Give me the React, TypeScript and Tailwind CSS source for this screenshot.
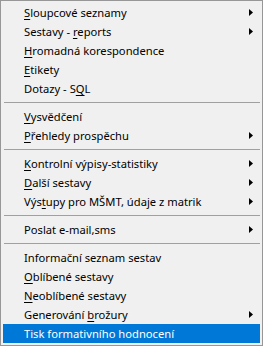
type Item = { label: string; key?: number; sub?: boolean; active?: boolean } | 'sep';

// key = index of the underlined (access key) character
const items: Item[] = [
  { label: 'Sloupcové seznamy', key: 0, sub: true },
  { label: 'Sestavy - reports', key: 10, sub: true },
  { label: 'Hromadná korespondence', key: 0 },
  { label: 'Etikety', key: 0 },
  { label: 'Dotazy - SQL', key: 10 },
  'sep',
  { label: 'Vysvědčení', key: 0 },
  { label: 'Přehledy prospěchu', key: 0, sub: true },
  'sep',
  { label: 'Kontrolní výpisy-statistiky', key: 0, sub: true },
  { label: 'Další sestavy', key: 0, sub: true },
  { label: 'Výstupy pro MŠMT, údaje z matrik', key: 3, sub: true },
  'sep',
  { label: 'Poslat e-mail,sms', sub: true },
  'sep',
  { label: 'Informační seznam sestav' },
  { label: 'Oblíbené sestavy', key: 0 },
  { label: 'Neoblíbené sestavy', key: 0 },
  { label: 'Generování brožury', key: 11, sub: true },
  { label: 'Tisk formativního hodnocení', active: true },
];

function Label({ text, k }: { text: string; k?: number }) {
  if (k === undefined) return <>{text}</>;
  return (
    <>
      {text.slice(0, k)}
      <span className="underline underline-offset-[2px]">{text[k]}</span>
      {text.slice(k + 1)}
    </>
  );
}

export default function App() {
  return (
    <div
      className="w-[263px] h-[346px] bg-[#f0f0f0] border border-[#979797] p-[2px] text-[11.2px] text-black"
      style={{ fontFamily: '"Noto Sans", sans-serif' }}
    >
      {items.map((item, i) =>
        item === 'sep' ? (
          <div key={i} className="h-[9px] flex items-center pl-px pr-0">
            <div className="h-px w-full bg-[#a0a0a0]" />
          </div>
        ) : (
          <div
            key={i}
            className={`h-[19px] flex items-center justify-between pl-[21px] pr-[7px] ${
              item.active ? 'bg-[#0078d7] text-white' : ''
            }`}
          >
            <span className="leading-none whitespace-nowrap">
              <Label text={item.label} k={item.key} />
            </span>
            {item.sub && (
              <svg width="4" height="7" viewBox="0 0 4 7" className="shrink-0">
                <path d="M0 0L4 3.5L0 7Z" fill="#000" />
              </svg>
            )}
          </div>
        )
      )}
    </div>
  );
}
